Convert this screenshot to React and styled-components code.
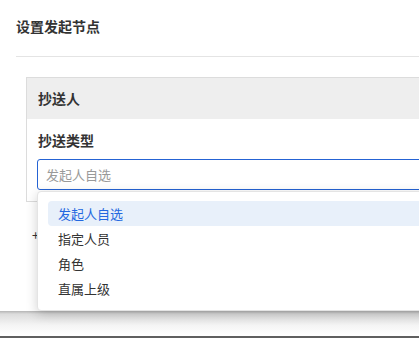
import styled, { createGlobalStyle } from "styled-components";

const GlobalStyle = createGlobalStyle`
  html, body {
    margin: 0;
    padding: 0;
    overflow: hidden;
    background: #fff;
    font-family: "Noto Sans CJK SC", "Noto Sans", sans-serif;
    color: #333;
  }
`;

const Page = styled.div`
  height: 100vh;
  display: flex;
  flex-direction: column;
  overflow: hidden;
`;

const Main = styled.div`
  flex: 1;
  padding: 16px 0 0 16px;
`;

const Title = styled.div`
  font-size: 14px;
  font-weight: 700;
  line-height: 21px;
  color: #333;
`;

const Divider = styled.div`
  margin-top: 19px;
  width: 600px;
  height: 1px;
  background: #e4e4e4;
`;

const Card = styled.div`
  margin: 20px 0 0 10px;
  width: 600px;
  border: 1px solid #dcdcdc;
`;

const CardHeader = styled.div`
  height: 41px;
  line-height: 41px;
  padding-left: 11px;
  background: #eee;
  font-size: 14px;
  font-weight: 700;
  color: #333;
`;

const CardBody = styled.div`
  padding: 11px 10px 11px 10px;
`;

const Label = styled.div`
  font-size: 14px;
  font-weight: 700;
  line-height: 20px;
  padding-left: 1px;
  color: #333;
`;

const SelectWrap = styled.div`
  position: relative;
  margin-top: 9px;
`;

const Select = styled.div`
  height: 29px;
  line-height: 29px;
  border: 1px solid #2563d4;
  border-radius: 3px;
  padding-left: 8px;
  font-size: 13px;
  color: #999;
  background: #fff;
`;

const Dropdown = styled.ul`
  position: absolute;
  z-index: 10;
  left: 0;
  right: 0;
  top: 32px;
  margin: 0;
  padding: 9px 10px;
  list-style: none;
  background: #fff;
  border: 1px solid #e4e4e4;
  border-radius: 4px;
  box-shadow: 0 3px 12px rgba(0, 0, 0, 0.18);
`;

const Option = styled.li`
  height: 25px;
  line-height: 25px;
  padding-left: 10px;
  border-radius: 4px;
  font-size: 13px;
  color: ${(p) => (p.$active ? "#2468e0" : "#333")};
  background: ${(p) => (p.$active ? "#e8f0fa" : "transparent")};
`;

const AddRow = styled.div`
  margin: 23px 0 0 16px;
  font-size: 13px;
  line-height: 20px;
  color: #333;
`;

const Footer = styled.div`
  height: 25px;
  flex-shrink: 0;
  background: linear-gradient(#b4b4b4, #dcdcdc 3px, #f4f4f4 14px, #fff 100%);
  border-bottom: 2px solid #5f5f5f;
`;

const options = ["发起人自选", "指定人员", "角色", "直属上级"];

const App = () => {
  return (
    <Page>
      <GlobalStyle />
      <Main>
        <Title>设置发起节点</Title>
        <Divider />
        <Card>
          <CardHeader>抄送人</CardHeader>
          <CardBody>
            <Label>抄送类型</Label>
            <SelectWrap>
              <Select>发起人自选</Select>
              <Dropdown>
                {options.map((o, i) => (
                  <Option key={o} $active={i === 0}>
                    {o}
                  </Option>
                ))}
              </Dropdown>
            </SelectWrap>
          </CardBody>
        </Card>
        <AddRow>+</AddRow>
      </Main>
      <Footer />
    </Page>
  );
};

export default App;
